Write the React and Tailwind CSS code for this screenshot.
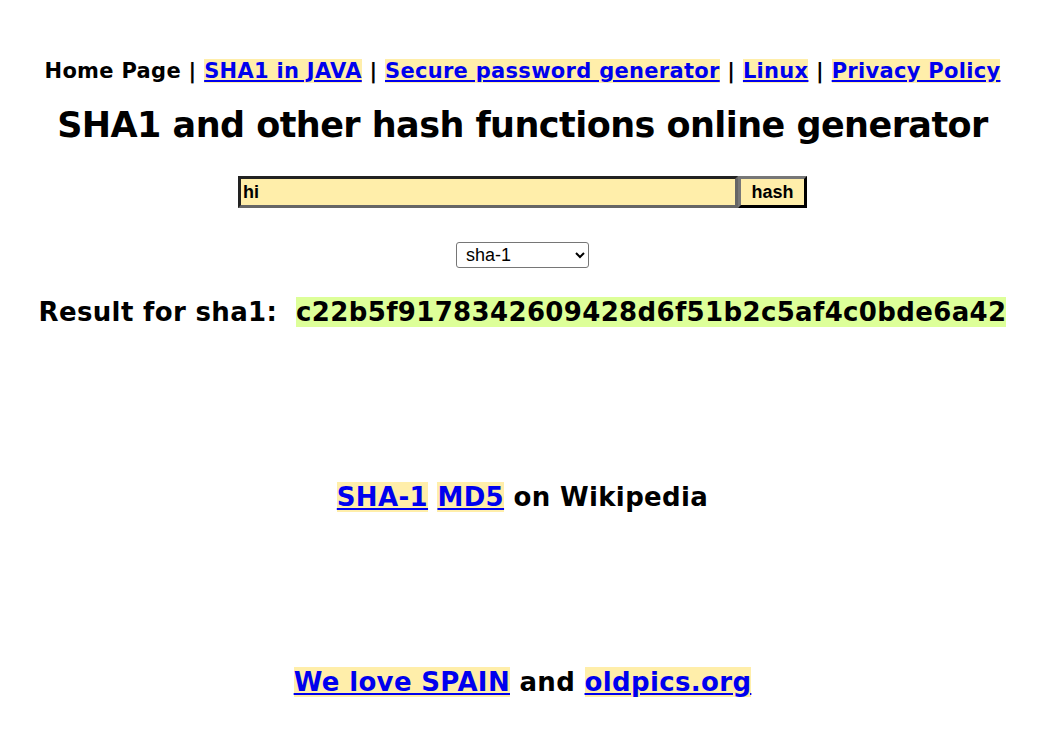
import React from 'react';

const Lnk = ({ children }) => (
  <a href="#" className="bg-[#ffeeaa] text-[#0000ee] underline">
    {children}
  </a>
);

export default function App() {
  return (
    <div className="min-h-[734px] bg-white text-black font-['DejaVu_Sans',sans-serif] font-bold text-center">
      <div className="pt-[59px] text-[21px] leading-[24px] tracking-[0.3px]">
        Home Page | <Lnk>SHA1 in JAVA</Lnk> | <Lnk>Secure password generator</Lnk> | <Lnk>Linux</Lnk> |{' '}
        <Lnk>Privacy Policy</Lnk>
      </div>
      <h1 className="mt-[20px] text-[35px] leading-[44px] tracking-[-0.55px]">
        SHA1 and other hash functions online generator
      </h1>

      <form className="mt-[29px] flex justify-center" onSubmit={(e) => e.preventDefault()}>
        <input
          defaultValue="hi"
          className="w-[500px] h-[32px] bg-[#ffeeaa] border-[3px] border-t-[#222] border-l-[#222] border-b-[#666] border-r-[#666] px-[2px] font-['Liberation_Sans',sans-serif] font-bold text-[18px] text-black outline-none"
        />
        <button
          type="submit"
          className="h-[32px] w-[69px] bg-[#ffeeaa] border-[3px] border-t-[#777] border-l-[#777] border-b-black border-r-black font-['Liberation_Sans',sans-serif] font-bold text-[18px] text-black"
        >
          hash
        </button>
      </form>

      <div className="mt-[34px] flex justify-center">
        <select
          defaultValue="sha-1"
          className="w-[133px] h-[26px] border border-[#767676] rounded-[3px] bg-white pl-[5px] font-['Liberation_Sans',sans-serif] font-normal text-[18px] text-black"
        >
          <option>md5</option>
          <option>sha-1</option>
          <option>sha-256</option>
          <option>sha-384</option>
          <option>sha-512</option>
        </select>
      </div>

      <div className="mt-[28px] text-[26px] leading-[32px] tracking-[0.35px]">
        Result for sha1:&nbsp; <span className="bg-[#ddff99]">c22b5f9178342609428d6f51b2c5af4c0bde6a42</span>
      </div>

      <div className="mt-[153px] text-[26px] leading-[32px] tracking-[0.35px]">
        <Lnk>SHA-1</Lnk> <Lnk>MD5</Lnk> on Wikipedia
      </div>

      <div className="mt-[153px] text-[26px] leading-[32px] tracking-[0.35px]">
        <Lnk>We love SPAIN</Lnk> and <Lnk>oldpics.org</Lnk>
      </div>
    </div>
  );
}
